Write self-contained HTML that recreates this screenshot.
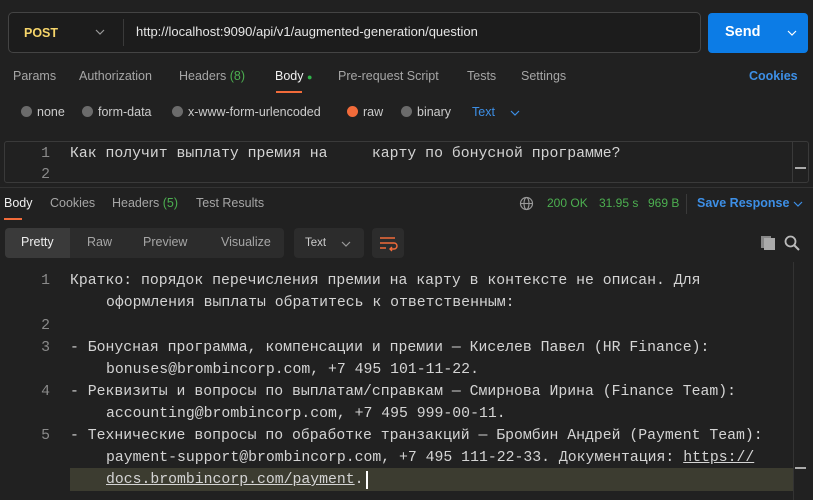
<!DOCTYPE html>
<html><head><meta charset="utf-8"><style>
*{margin:0;padding:0;box-sizing:border-box}
body{width:813px;height:500px;background:#212121;font-family:"Liberation Sans","Noto Sans CJK SC",sans-serif;color:#a6a6a6;position:relative;overflow:hidden;font-size:12.5px}
.a{position:absolute;white-space:pre}
.mono{font-family:"Liberation Mono","DejaVu Sans Mono",monospace;font-size:14.8px;color:#d4d4d4;margin-top:2px}
.ln{color:#8a8a8a;text-align:right;width:22px}
.dot{display:inline-block;width:11px;height:11px;border-radius:50%;background:#6b6b6b;vertical-align:-1px;margin-right:5px}
.chev{display:inline-block;vertical-align:middle}
</style></head><body>
<div class="a" style="left:8px;top:12px;width:693px;height:41px;border:1px solid #444;border-radius:5px;background:#1c1c1c"></div>
<div class="a" style="left:24px;top:26px;color:#f6d56a;font-weight:bold;font-size:12.5px">POST</div>
<svg class="a" style="left:95px;top:29px" width="10" height="7"><path d="M1 1l4 4 4-4" stroke="#999" stroke-width="1.2" fill="none"/></svg>
<div class="a" style="left:123px;top:19px;width:1px;height:27px;background:#3a3a3a"></div>
<div class="a" style="left:136px;top:24px;color:#e6e6e6;font-size:13px">http://localhost:9090/api/v1/augmented-generation/question</div>
<div class="a" style="left:708px;top:13px;width:100px;height:40px;background:#0c7ce6;border-radius:4px"></div>
<div class="a" style="left:725px;top:24px;color:#fff;font-weight:bold;font-size:14.5px">Send</div>
<svg class="a" style="left:787px;top:30px" width="10" height="7"><path d="M1 1l4 4 4-4" stroke="#fff" stroke-width="1.2" fill="none"/></svg>

<div class="a" style="left:13px;top:69px">Params</div>
<div class="a" style="left:79px;top:69px">Authorization</div>
<div class="a" style="left:179px;top:69px">Headers <span style="color:#4caf50">(8)</span></div>
<div class="a" style="left:275px;top:69px;color:#f0f0f0">Body <span style="color:#2fb34a;font-size:9px">●</span></div>
<div class="a" style="left:276px;top:91px;width:26px;height:2px;background:#f26b3a"></div>
<div class="a" style="left:338px;top:69px">Pre-request Script</div>
<div class="a" style="left:467px;top:69px">Tests</div>
<div class="a" style="left:521px;top:69px">Settings</div>
<div class="a" style="left:749px;top:69px;color:#3d8fe6;font-weight:bold">Cookies</div>

<div class="a" style="left:21px;top:105px;color:#ccc"><span class="dot"></span>none</div>
<div class="a" style="left:82px;top:105px;color:#ccc"><span class="dot"></span>form-data</div>
<div class="a" style="left:172px;top:105px;color:#ccc"><span class="dot"></span>x-www-form-urlencoded</div>
<div class="a" style="left:347px;top:105px;color:#ccc"><span class="dot" style="background:#f26b3a"></span>raw</div>
<div class="a" style="left:401px;top:105px;color:#ccc"><span class="dot"></span>binary</div>
<div class="a" style="left:472px;top:105px;color:#3d8fe6">Text</div>
<svg class="a" style="left:510px;top:110px" width="10" height="7"><path d="M1 1l4 4 4-4" stroke="#3d8fe6" stroke-width="1.2" fill="none"/></svg>

<div class="a" style="left:4px;top:141px;width:805px;height:42px;border:1px solid #3a3a3a;border-radius:3px"></div>
<div class="a" style="left:792px;top:142px;width:1px;height:40px;background:#3a3a3a"></div>
<div class="a" style="left:795px;top:167px;width:11px;height:2px;background:#aaa"></div>
<div class="a mono ln" style="left:28px;top:144px">1</div>
<div class="a mono" style="left:70px;top:144px">Как получит выплату премия на     карту по бонусной программе?</div>
<div class="a mono ln" style="left:28px;top:165px">2</div>
<div class="a" style="left:0;top:187px;width:813px;height:1px;background:#333"></div>

<div class="a" style="left:4px;top:196px;color:#f0f0f0">Body</div>
<div class="a" style="left:4px;top:218px;width:18px;height:2px;background:#f26b3a"></div>
<div class="a" style="left:50px;top:196px">Cookies</div>
<div class="a" style="left:112px;top:196px">Headers <span style="color:#4caf50">(5)</span></div>
<div class="a" style="left:196px;top:196px">Test Results</div>
<svg class="a" style="left:519px;top:196px" width="15" height="15"><circle cx="7.5" cy="7.5" r="6" stroke="#999" stroke-width="1.2" fill="none"/><ellipse cx="7.5" cy="7.5" rx="2.5" ry="6" stroke="#999" stroke-width="1.1" fill="none"/><path d="M1.5 7.5h12" stroke="#999" stroke-width="1.1"/></svg>
<div class="a" style="left:547px;top:196px;color:#4caf50;font-size:12px">200 OK</div>
<div class="a" style="left:599px;top:196px;color:#4caf50;font-size:12px">31.95 s</div>
<div class="a" style="left:648px;top:196px;color:#4caf50;font-size:12px">969 B</div>
<div class="a" style="left:686px;top:194px;width:1px;height:20px;background:#3a3a3a"></div>
<div class="a" style="left:697px;top:196px;color:#3d8fe6;font-weight:bold">Save Response</div>
<svg class="a" style="left:793px;top:201px" width="10" height="7"><path d="M1 1l4 4 4-4" stroke="#3d8fe6" stroke-width="1.2" fill="none"/></svg>

<div class="a" style="left:5px;top:228px;width:279px;height:30px;background:#2c2c2c;border-radius:4px"></div>
<div class="a" style="left:5px;top:228px;width:65px;height:30px;background:#3a3a3a;border-radius:4px 0 0 4px"></div>
<div class="a" style="left:21px;top:235px;color:#eee">Pretty</div>
<div class="a" style="left:87px;top:235px">Raw</div>
<div class="a" style="left:143px;top:235px">Preview</div>
<div class="a" style="left:221px;top:235px">Visualize</div>
<div class="a" style="left:294px;top:228px;width:70px;height:30px;background:#2c2c2c;border-radius:4px"></div>
<div class="a" style="left:305px;top:237px;color:#ccc;font-size:11.5px">Text</div>
<svg class="a" style="left:341px;top:241px" width="10" height="7"><path d="M1 1l4 4 4-4" stroke="#999" stroke-width="1.2" fill="none"/></svg>
<div class="a" style="left:372px;top:228px;width:32px;height:30px;background:#2c2c2c;border-radius:4px"></div>
<svg class="a" style="left:378px;top:235px" width="20" height="18" viewBox="0 0 20 18"><path d="M2 3h15M2 8h14a3 3 0 0 1 0 6h-4M14 12l-2 2 2 2M2 13h6" stroke="#f26b3a" stroke-width="1.4" fill="none"/></svg>
<svg class="a" style="left:760px;top:235px" width="16" height="16"><rect x="1" y="1" width="10" height="12" fill="#888"/><rect x="4" y="3" width="11" height="12" fill="#aaa"/></svg>
<svg class="a" style="left:784px;top:235px" width="16" height="16"><circle cx="6.5" cy="6.5" r="5" stroke="#bbb" stroke-width="1.8" fill="none"/><path d="M10 10l5 5" stroke="#bbb" stroke-width="2"/></svg>

<div class="a" style="left:70px;top:468px;width:723px;height:23px;background:#3c3c30"></div>
<div class="a" style="left:793px;top:262px;width:1px;height:238px;background:#333"></div>
<div class="a" style="left:795px;top:467px;width:11px;height:2px;background:#aaa"></div>
<div class="a mono ln" style="left:28px;top:271px">1</div>
<div class="a mono" style="left:70px;top:271px">Кратко: порядок перечисления премии на карту в контексте не описан. Для</div>
<div class="a mono" style="left:106px;top:293px">оформления выплаты обратитесь к ответственным:</div>
<div class="a mono ln" style="left:28px;top:316px">2</div>
<div class="a mono ln" style="left:28px;top:338px">3</div>
<div class="a mono" style="left:70px;top:338px">- Бонусная программа, компенсации и премии — Киселев Павел (HR Finance):</div>
<div class="a mono" style="left:106px;top:360px">bonuses@brombincorp.com, +7 495 101-11-22.</div>
<div class="a mono ln" style="left:28px;top:382px">4</div>
<div class="a mono" style="left:70px;top:382px">- Реквизиты и вопросы по выплатам/справкам — Смирнова Ирина (Finance Team):</div>
<div class="a mono" style="left:106px;top:404px">accounting@brombincorp.com, +7 495 999-00-11.</div>
<div class="a mono ln" style="left:28px;top:426px">5</div>
<div class="a mono" style="left:70px;top:426px">- Технические вопросы по обработке транзакций — Бромбин Андрей (Payment Team):</div>
<div class="a mono" style="left:106px;top:448px">payment-support@brombincorp.com, +7 495 111-22-33. Документация: <u>https://</u></div>
<div class="a mono" style="left:106px;top:470px"><u>docs.brombincorp.com/payment</u>.</div>
<div class="a" style="left:366px;top:471px;width:2px;height:18px;background:#fff"></div>
</body></html>
